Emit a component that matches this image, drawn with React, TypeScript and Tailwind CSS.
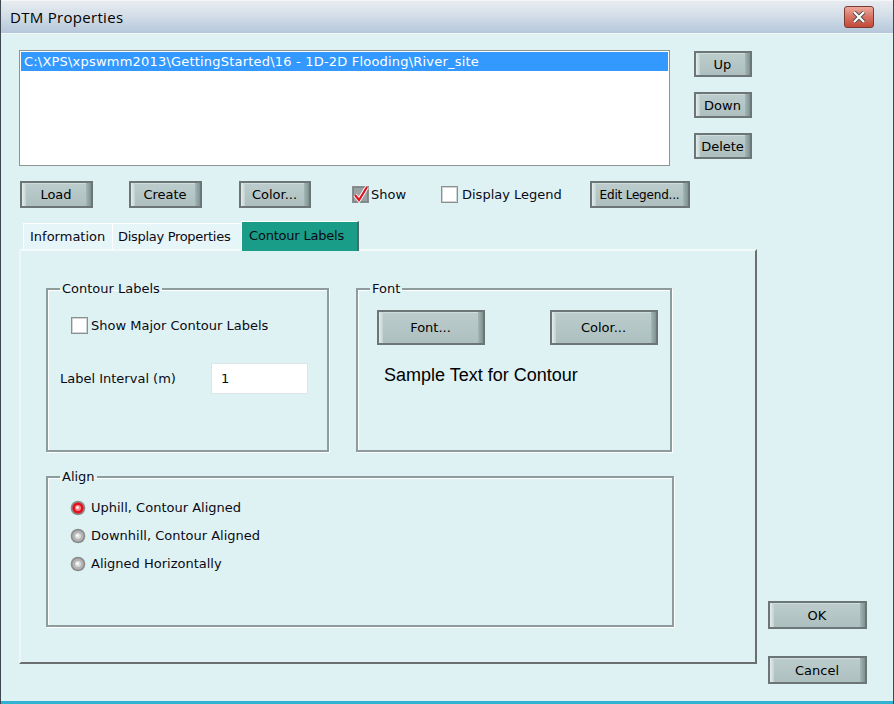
import React from 'react';

const UI = "font-['DejaVu_Sans',sans-serif] text-[13px] leading-[16px] text-[#0a0a14]";

// Classic 3D push button with the grey-teal skin
function Btn({ label, className = '', textClass = '' }: { label: string; className?: string; textClass?: string }) {
  return (
    <div className={`border-2 border-[#6d7676] bg-[#b3c4c4] flex ${className}`}>
      <div className="w-[4px] shrink-0 bg-[linear-gradient(90deg,#e3ecec,#c3d2d2)]" />
      <div className={`flex-1 flex items-center justify-center whitespace-nowrap border-t border-[#cfdcdc] bg-[linear-gradient(180deg,#bccccc,#adbfbf)] text-black ${textClass}`}>
        {label}
      </div>
      <div className="w-[5px] shrink-0 bg-[linear-gradient(90deg,#a4b6b6,#7f9393)]" />
    </div>
  );
}

function CheckBox({ checked }: { checked?: boolean }) {
  return (
    <svg width="17" height="17" viewBox="0 0 17 17" className="shrink-0">
      <rect x="0.5" y="0.5" width="16" height="16" fill={checked ? '#9aa3a3' : '#ffffff'} stroke="#8a8f8f" />
      <rect x="1.5" y="1.5" width="14" height="14" fill="none" stroke={checked ? '#7d8686' : '#d0d4d4'} />
      {checked && (
        <>
          <path d="M3 9 L7 14 L15 1" fill="none" stroke="#ffffff" strokeWidth="4" />
          <path d="M3 9 L7 14 L15 1" fill="none" stroke="#e0141e" strokeWidth="2.2" />
        </>
      )}
    </svg>
  );
}

function Radio({ on }: { on?: boolean }) {
  return (
    <svg width="16" height="16" viewBox="0 0 16 16" className="shrink-0">
      <circle cx="8" cy="8" r="7.3" fill="#8c8c8c" />
      <circle cx="8" cy="8" r="5.6" fill={on ? '#e8101c' : '#b4b4b4'} />
      <circle cx="8" cy="8" r="3" fill={on ? '#f28a8a' : '#dcdcdc'} />
      <circle cx="7.5" cy="7.5" r="1.3" fill="#ffffff" />
    </svg>
  );
}

function Group({ title, className, children }: { title: string; className: string; children: React.ReactNode }) {
  return (
    <fieldset className={`border-2 border-[#8d9c9c] shadow-[1px_1px_0_#ffffff,inset_1px_1px_0_#ffffff] ${className}`}>
      <legend className="ml-[12px] px-[2px] leading-[15px]">{title}</legend>
      {children}
    </fieldset>
  );
}

export default function App() {
  return (
    <div className={`w-[894px] h-[704px] overflow-hidden flex flex-col bg-[#def2f4] border-l border-r border-[#3d4852] ${UI}`}>
      {/* Title bar */}
      <div className="h-[34px] shrink-0 flex items-center justify-between pl-[9px] pr-[19px] border-t border-[#f4f6f8] bg-[linear-gradient(180deg,#e8ecf0,#d4dee8_45%,#b4c7da)] border-b border-[#a9bccf]">
        <span className="font-['Open_Sans',sans-serif] text-[15px] tracking-[0.3px] text-black">DTM Properties</span>
        <div className="w-[30px] h-[22px] rounded-[3px] border border-[#7a3a34] bg-[linear-gradient(180deg,#eeaa9c,#d87262_50%,#c24a38)] flex items-center justify-center">
          <svg width="14" height="12" viewBox="0 0 14 12">
            <path d="M2 1 L12 11 M12 1 L2 11" stroke="#4a4a4a" strokeWidth="4" />
            <path d="M2 1 L12 11 M12 1 L2 11" stroke="#ffffff" strokeWidth="2.2" />
          </svg>
        </div>
      </div>

      {/* Body */}
      <div className="flex-1 flex flex-col pl-[18px] pt-[16px] border-b-[3px] border-[#30b2d2]">
        {/* List + order buttons */}
        <div className="flex">
          <div className="w-[651px] h-[116px] border border-[#8e9494] bg-white p-[1px]">
            <div className="h-[19px] bg-[#3399ff] text-white pl-[3px] flex items-center tracking-[0.2px]">
              C:\XPS\xpswmm2013\GettingStarted\16 - 1D-2D Flooding\River_site
            </div>
          </div>
          <div className="ml-[24px] mt-[1px] flex flex-col gap-[15px]">
            <Btn label="Up" className="w-[58px] h-[26px]" />
            <Btn label="Down" className="w-[58px] h-[26px]" />
            <Btn label="Delete" className="w-[58px] h-[26px]" />
          </div>
        </div>

        {/* Tool row */}
        <div className="flex items-center mt-[15px] h-[27px]">
          <Btn label="Load" className="ml-[1px] w-[73px] h-[27px]" />
          <Btn label="Create" className="ml-[36px] w-[73px] h-[27px]" />
          <Btn label="Color..." className="ml-[37px] w-[72px] h-[27px]" />
          <div className="ml-[41px] w-[89px] flex items-center gap-[2px]">
            <CheckBox checked />
            <span>Show</span>
          </div>
          <div className="w-[149px] flex items-center gap-[4px]">
            <CheckBox />
            <span>Display Legend</span>
          </div>
          <Btn label="Edit Legend..." className="w-[100px] h-[27px]" textClass="text-[12px] tracking-[-0.2px]" />
        </div>

        {/* Tabs */}
        <div className="flex items-end h-[28px] mt-[13px] pl-[4px]">
          <div className="w-[89px] h-[26px] bg-[#e6f5f7] border-t border-l border-white flex items-center pl-[6px]">Information</div>
          <div className="w-[129px] h-[26px] bg-[#e6f5f7] border-t border-l border-white flex items-center pl-[5px] tracking-[-0.3px]">Display Properties</div>
          <div className="relative z-10 -mb-[2px] w-[118px] h-[30px] bg-[#1a9d88] border-t border-l border-white border-r-2 border-r-[#4c6a66] flex items-center pl-[7px] pb-[2px] tracking-[-0.2px]">Contour Labels</div>
        </div>

        {/* Panel + dialog buttons */}
        <div className="flex">
          <div className="w-[738px] h-[415px] border-t-2 border-l-2 border-t-[#f2fafa] border-l-[#eef6f6] border-r-2 border-b-2 border-r-[#6a6f6f] border-b-[#6a6f6f] flex flex-col pl-[25px] pt-[30px]">
            <div className="flex">
              <Group title="Contour Labels" className="w-[283px] h-[171px] flex flex-col">
                <div className="flex items-center ml-[23px] mt-[21px] gap-[3px]">
                  <CheckBox />
                  <span>Show Major Contour Labels</span>
                </div>
                <div className="flex items-center ml-[12px] mt-[29px]">
                  <span className="w-[151px]">Label Interval (m)</span>
                  <div className="w-[97px] h-[31px] bg-white border border-[#dde6e6] flex items-center pl-[9px]">1</div>
                </div>
              </Group>
              <Group title="Font" className="ml-[27px] w-[316px] h-[171px] flex flex-col">
                <div className="flex ml-[19px] mt-[14px] gap-[65px]">
                  <Btn label="Font..." className="w-[108px] h-[35px]" />
                  <Btn label="Color..." className="w-[108px] h-[35px]" />
                </div>
                <div className="ml-[26px] mt-[20px] font-['Liberation_Sans',sans-serif] text-[18px] leading-[20px] text-black">
                  Sample Text for Contour
                </div>
              </Group>
            </div>
            <Group title="Align" className="mt-[17px] w-[628px] h-[158px] flex flex-col">
              <div className="flex flex-col ml-[22px] mt-[16px] gap-[12px]">
                <div className="flex items-center gap-[5px]"><Radio on /><span>Uphill, Contour Aligned</span></div>
                <div className="flex items-center gap-[5px]"><Radio /><span>Downhill, Contour Aligned</span></div>
                <div className="flex items-center gap-[5px]"><Radio /><span>Aligned Horizontally</span></div>
              </div>
            </Group>
          </div>
          <div className="ml-[11px] flex flex-col">
            <Btn label="OK" className="mt-[352px] w-[99px] h-[28px]" />
            <Btn label="Cancel" className="mt-[27px] w-[99px] h-[28px]" />
          </div>
        </div>
      </div>
    </div>
  );
}
